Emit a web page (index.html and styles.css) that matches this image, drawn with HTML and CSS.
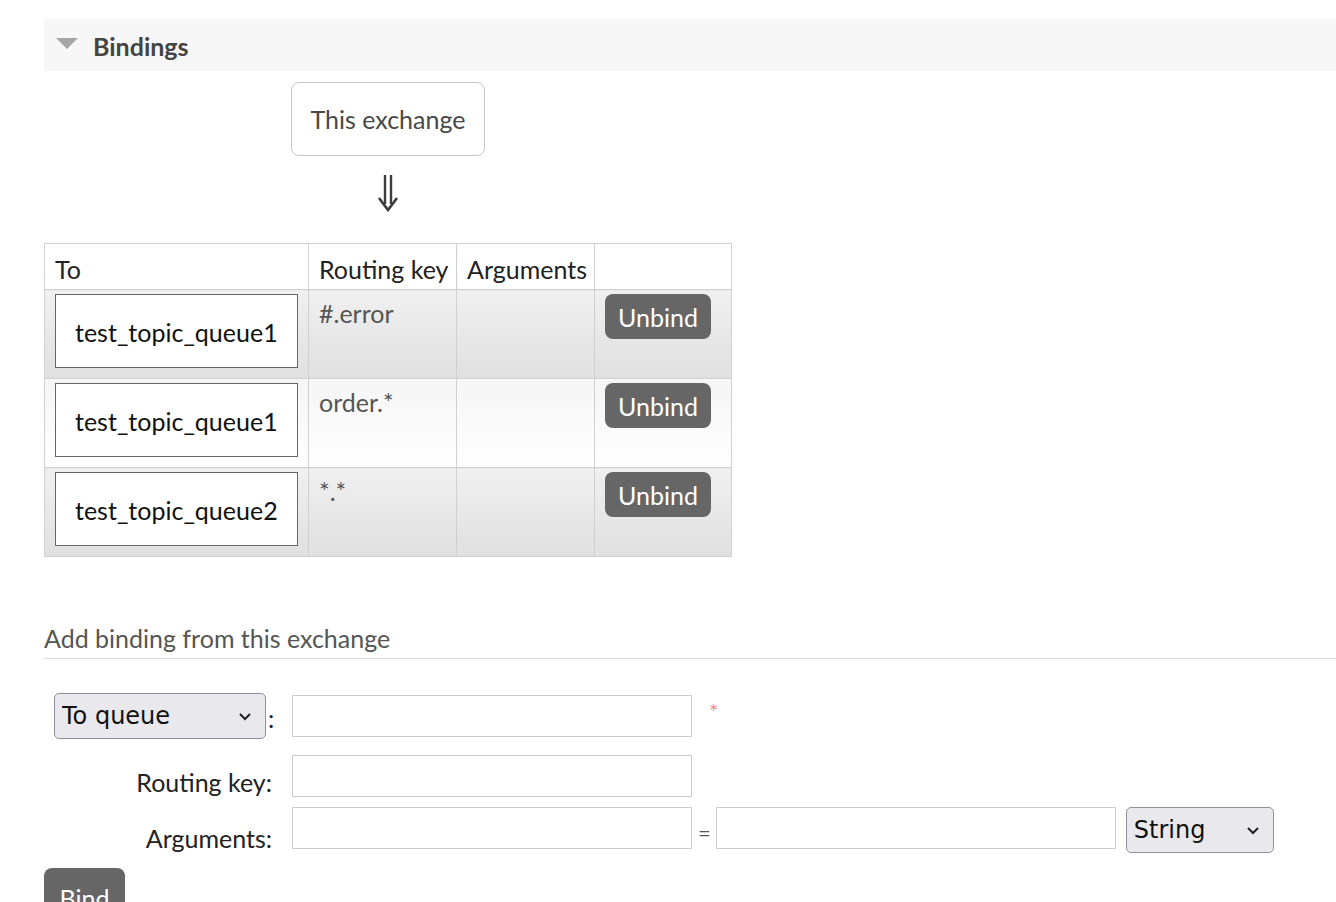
FILE: index.html
```html
<!DOCTYPE html>
<html>
<head>
<meta charset="utf-8">
<link rel="stylesheet" href="styles.css">
</head>
<body>
<div class="page">
  <div class="section-head">
    <span class="tri"></span>
    <h2 class="section-title">Bindings</h2>
  </div>

  <div class="source">
    <div class="source-box">This exchange</div>
    <svg class="down-arrow" width="22" height="38" viewBox="0 0 22 38">
      <path d="M8 1 V30 M14 1 V30" stroke="#3d3d3d" stroke-width="2.4" fill="none"/>
      <path d="M2 24 L11 36 L20 24" stroke="#3d3d3d" stroke-width="2.6" fill="none" stroke-linejoin="miter"/>
    </svg>
  </div>

  <table class="bindings">
    <thead>
      <tr>
        <th class="c-to">To</th>
        <th class="c-rk">Routing key</th>
        <th class="c-args">Arguments</th>
        <th class="c-act"></th>
      </tr>
    </thead>
    <tbody>
      <tr class="alt1">
        <td><span class="dest">test_topic_queue1</span></td>
        <td class="rk">#.error</td>
        <td></td>
        <td><button class="btn">Unbind</button></td>
      </tr>
      <tr class="alt2">
        <td><span class="dest">test_topic_queue1</span></td>
        <td class="rk">order.*</td>
        <td></td>
        <td><button class="btn">Unbind</button></td>
      </tr>
      <tr class="alt1">
        <td><span class="dest">test_topic_queue2</span></td>
        <td class="rk">*.*</td>
        <td></td>
        <td><button class="btn">Unbind</button></td>
      </tr>
    </tbody>
  </table>

  <h3 class="sub-title">Add binding from this exchange</h3>

  <form class="bind-form">
    <div class="frow r1">
      <div class="lbl lbl-sel"><select class="sel sel-dest"><option>To queue</option></select><span class="colon">:</span></div>
      <input class="txt" type="text">
      <span class="req">*</span>
    </div>
    <div class="frow r2">
      <label class="lbl lbl-text">Routing key:</label>
      <input class="txt" type="text">
    </div>
    <div class="frow r3">
      <label class="lbl lbl-text">Arguments:</label>
      <input class="txt" type="text">
      <span class="eq">=</span>
      <input class="txt" type="text">
      <select class="sel sel-type"><option>String</option></select>
    </div>
    <button class="btn btn-bind" type="button">Bind</button>
  </form>
</div>
</body>
</html>
```

FILE: styles.css
```css
html, body {
  margin: 0;
  padding: 0;
  background: #fff;
}
body {
  font-family: "Lato", "Open Sans", sans-serif;
  font-size: 25px;
  color: #484848;
  overflow: hidden;
}
.page {
  padding: 18px 0 0 44px;
}
.section-head {
  display: flex;
  align-items: center;
  height: 53px;
  background: #f7f7f7;
  padding-left: 12px;
}
.tri {
  width: 0;
  height: 0;
  border-left: 11px solid transparent;
  border-right: 11px solid transparent;
  border-top: 11px solid #a6a6a6;
  margin-right: 15px;
  margin-top: -3px;
}
.section-title {
  margin: 0;
  font-size: 25px;
  font-weight: bold;
  color: #444;
  padding-top: 2px;
}
.source {
  display: flex;
  flex-direction: column;
  align-items: center;
  width: 194px;
  margin: 11px 0 0 247px;
}
.source-box {
  box-sizing: border-box;
  width: 194px;
  height: 74px;
  border: 1px solid #c8c8c8;
  border-radius: 8px;
  display: flex;
  align-items: center;
  justify-content: center;
  color: #484848;
}
.down-arrow {
  margin-top: 18px;
  display: block;
}
.bindings {
  border-collapse: collapse;
  table-layout: fixed;
  width: 687px;
  margin-top: 31px;
  border: 1px solid #cfcfcf;
}
.bindings th, .bindings td {
  border: 1px solid #d0d0d0;
  text-align: left;
  vertical-align: top;
  white-space: nowrap;
}
.bindings th {
  font-weight: normal;
  color: #222;
  height: 46px;
  padding: 4px 10px 0;
  vertical-align: middle;
  box-sizing: border-box;
  background: #fff;
}
.c-to { width: 264px; }
.c-rk { width: 148px; }
.c-args { width: 138px; }
.c-act { width: 137px; }
.bindings td {
  padding: 4px 10px 9px;
  height: 89px;
  box-sizing: border-box;
}
.alt1 td {
  background: linear-gradient(#f0f0f0, #e0e0e0);
}
.alt2 td {
  background: linear-gradient(#f5f5f5, #ffffff);
}
.dest {
  display: flex;
  align-items: center;
  box-sizing: border-box;
  height: 74px;
  padding: 2px 19px 0;
  background: #fff;
  border: 1px solid #666;
  color: #111;
  white-space: nowrap;
}
.rk {
  color: #555;
  line-height: 38px;
}
.btn {
  font-family: inherit;
  font-size: 25px;
  color: #fff;
  background: #666;
  border: none;
  border-radius: 8px;
  height: 45px;
  padding: 0 13px;
  cursor: pointer;
}
.sub-title {
  margin: 66px 0 0;
  font-size: 25px;
  font-weight: normal;
  color: #555;
  padding-bottom: 5px;
  border-bottom: 1px solid #ddd;
}
.bind-form {
  padding-top: 34px;
}
.frow {
  display: flex;
  align-items: flex-start;
}
.lbl {
  box-sizing: border-box;
  width: 248px;
  padding-left: 10px;
  padding-right: 20px;
  display: flex;
  justify-content: flex-end;
  align-items: center;
  color: #222;
  flex-shrink: 0;
}
.lbl-sel {
  justify-content: flex-start;
  padding-right: 0;
}
.colon {
  padding-left: 2px;
  margin-top: 4px;
}
.sel {
  appearance: none;
  -webkit-appearance: none;
  font-family: "DejaVu Sans", sans-serif;
  font-size: 24px;
  color: #111;
  background-color: #e9e9ed;
  background-image: url("data:image/svg+xml,%3Csvg xmlns='http://www.w3.org/2000/svg' width='14' height='9' viewBox='0 0 14 9'%3E%3Cpath d='M2 2 L7 7 L12 2' stroke='%23222' stroke-width='2' fill='none'/%3E%3C/svg%3E");
  background-repeat: no-repeat;
  background-position: right 13px center;
  border: 1px solid #8f8f9d;
  border-radius: 5px;
  height: 46px;
  padding: 0 40px 0 7px;
  margin: 0;
  flex-shrink: 0;
}
.sel-dest {
  width: 212px;
}
.txt {
  box-sizing: border-box;
  width: 400px;
  height: 42px;
  border: 1px solid #ccc;
  margin: 0;
  font-family: inherit;
  font-size: 20px;
  background: #fff;
  flex-shrink: 0;
}
.r1 .txt { margin-top: 2px; }
.req {
  color: #f28b8b;
  font-size: 22px;
  margin-left: 17px;
  margin-top: 5px;
}
.r2 { margin-top: 16px; }
.lbl-text {
  padding-top: 12px;
}
.r3 { margin-top: 10px; }
.r3 .lbl-text { padding-top: 16px; }
.eq {
  color: #555;
  padding: 12px 5px 0 6px;
  font-size: 22px;
}
.sel-type {
  width: 148px;
  margin-left: 10px;
}
.btn-bind {
  display: block;
  margin-top: 15px;
  width: 81px;
  height: 50px;
  padding: 0;
  line-height: 60px;
}
```
